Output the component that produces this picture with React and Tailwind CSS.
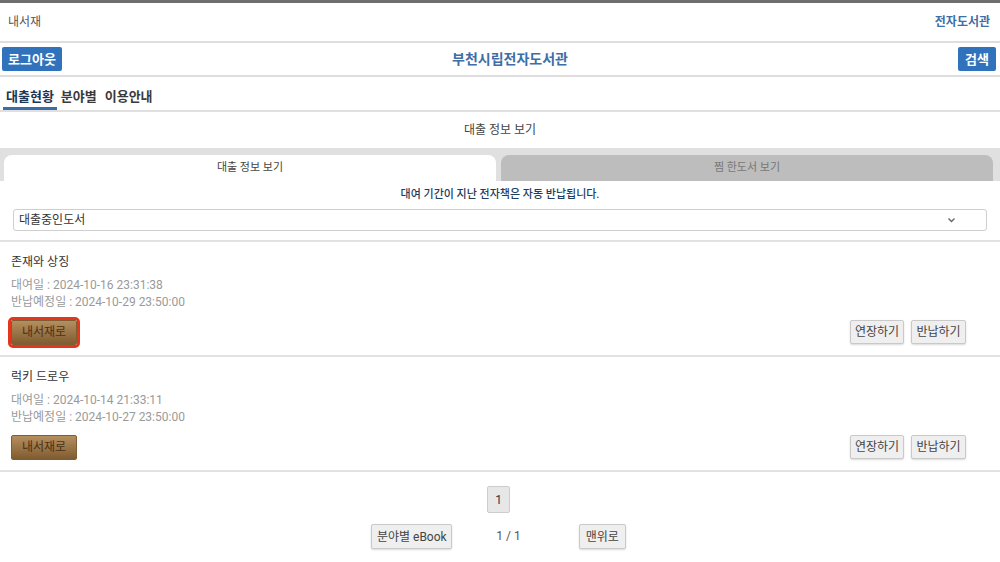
import React from 'react';

const loans = [
  {
    id: 1,
    title: '존재와 상징',
    lent: '2024-10-16 23:31:38',
    due: '2024-10-29 23:50:00',
    highlighted: true,
  },
  {
    id: 2,
    title: '럭키 드로우',
    lent: '2024-10-14 21:33:11',
    due: '2024-10-27 23:50:00',
    highlighted: false,
  },
];

function GrayButton({ children, className = '' }) {
  return (
    <button
      className={`h-[24px] px-0 whitespace-nowrap bg-[#efefef] border border-[#c9c9c9] rounded-[2px] shadow-[0_1px_2px_rgba(0,0,0,0.15)] text-[12px] text-[#444] leading-none ${className}`}
    >
      {children}
    </button>
  );
}

function LoanItem({ loan }) {
  return (
    <div className="px-[11px] pt-[12px] pb-[7px] border-b-2 border-[#e2e2e2]">
      <div className="h-[17px] leading-[17px] text-[12px] text-[#333]">{loan.title}</div>
      <div className="mt-[6px] text-[12px] leading-[17px] text-[#9a9a9a]">
        <div>대여일 : {loan.lent}</div>
        <div>반납예정일 : {loan.due}</div>
      </div>
      <div className="mt-[5px] h-[32px] flex items-center justify-between">
        <button
          className={`w-[66px] h-[25px] whitespace-nowrap rounded-[2px] border border-[#7e5d34] bg-gradient-to-b from-[#b58f5e] to-[#7f5c31] text-[12px] text-[#4a3116] leading-none ${
            loan.highlighted ? 'outline-[3px] outline outline-[#e3371d]' : ''
          }`}
        >
          내서재로
        </button>
        <div className="flex gap-[7px] mr-[23px]">
          <GrayButton className="w-[54px]">연장하기</GrayButton>
          <GrayButton className="w-[55px]">반납하기</GrayButton>
        </div>
      </div>
    </div>
  );
}

export default function App() {
  return (
    <div className="w-[1000px] min-h-[562px] bg-white border-t-[3px] border-[#6e6e6e] font-[Roboto,'Noto_Sans_CJK_KR',sans-serif]">
      {/* 상단 */}
      <div className="h-[40px] flex items-center justify-between px-[8px] border-b-2 border-[#dedede]">
        <span className="text-[12px] text-[#555]">내서재</span>
        <span className="text-[12px] font-bold text-[#3d6ea6] mr-[2px]">전자도서관</span>
      </div>

      <div className="h-[34px] flex items-center justify-between pl-[2px] pr-[4px] border-b-2 border-[#dedede]">
        <button className="w-[60px] h-[24px] rounded-[2px] bg-[#3172bd] text-white text-[13px] font-bold leading-none">
          로그아웃
        </button>
        <span className="text-[14px] font-bold text-[#3d6ea8]">부천시립전자도서관</span>
        <button className="w-[38px] h-[24px] rounded-[2px] bg-[#3172bd] text-white text-[13px] font-bold leading-none">
          검색
        </button>
      </div>

      {/* 메뉴 */}
      <div className="h-[35px] flex items-end pl-[3px] border-b-2 border-[#e0e0e0]">
        <div className="h-full flex flex-col justify-end">
          <span className="px-[3px] text-[13px] font-bold text-[#1c3552] leading-[18px] mb-[1px]">대출현황</span>
          <div className="h-[3px] bg-[#3b6ea6]" />
        </div>
        <span className="ml-[4px] text-[13px] font-bold text-[#3a3a3a] leading-[18px] mb-[4px]">분야별</span>
        <span className="ml-[8px] text-[13px] font-bold text-[#3a3a3a] leading-[18px] mb-[4px]">이용안내</span>
      </div>

      <div className="h-[36px] flex items-center justify-center text-[12px] text-[#444]">
        대출 정보 보기
      </div>

      {/* 탭 */}
      <div className="bg-[#e0e0e0] pt-[7px] px-[4px] flex gap-[5px] pr-[7px]">
        <div className="flex-1 h-[26px] bg-white rounded-t-[8px] flex items-center justify-center text-[11px] text-[#444]">
          대출 정보 보기
        </div>
        <div className="flex-1 h-[26px] bg-[#bdbdbd] rounded-t-[8px] flex items-center justify-center text-[11px] text-[#777]">
          찜 한도서 보기
        </div>
      </div>

      <div className="h-[28px] flex items-center justify-center text-[11px] font-medium text-[#1f3d5c]">
        대여 기간이 지난 전자책은 자동 반납됩니다.
      </div>

      <div className="px-[13px] pb-[9px] border-b-2 border-[#e2e2e2]">
        <div className="h-[22px] border border-[#cfcfcf] rounded-[3px] flex items-center justify-between pl-[5px] pr-[30px] text-[12px] text-[#333]">
          <span>대출중인도서</span>
          <svg width="9" height="6" viewBox="0 0 9 6" fill="none">
            <path d="M1.5 1.5 L4.5 4.5 L7.5 1.5" stroke="#666" strokeWidth="1.4" />
          </svg>
        </div>
      </div>

      {loans.map((loan) => (
        <LoanItem key={loan.id} loan={loan} />
      ))}

      {/* 페이지 */}
      <div className="flex justify-center pt-[14px]">
        <div className="w-[23px] h-[27px] ml-[-3px] bg-[#e7e7e7] border border-[#cdcdcd] rounded-[2px] flex items-center justify-center text-[12px] text-[#334]">
          1
        </div>
      </div>
      <div className="flex justify-center items-center mt-[11px] pb-[14px] ml-[-3px]">
        <GrayButton className="w-[81px] h-[25px]">분야별 eBook</GrayButton>
        <span className="ml-[44px] mr-[58px] text-[12px] text-[#555] -mt-[2px]">1 / 1</span>
        <GrayButton className="w-[47px] h-[25px]">맨위로</GrayButton>
      </div>
    </div>
  );
}
